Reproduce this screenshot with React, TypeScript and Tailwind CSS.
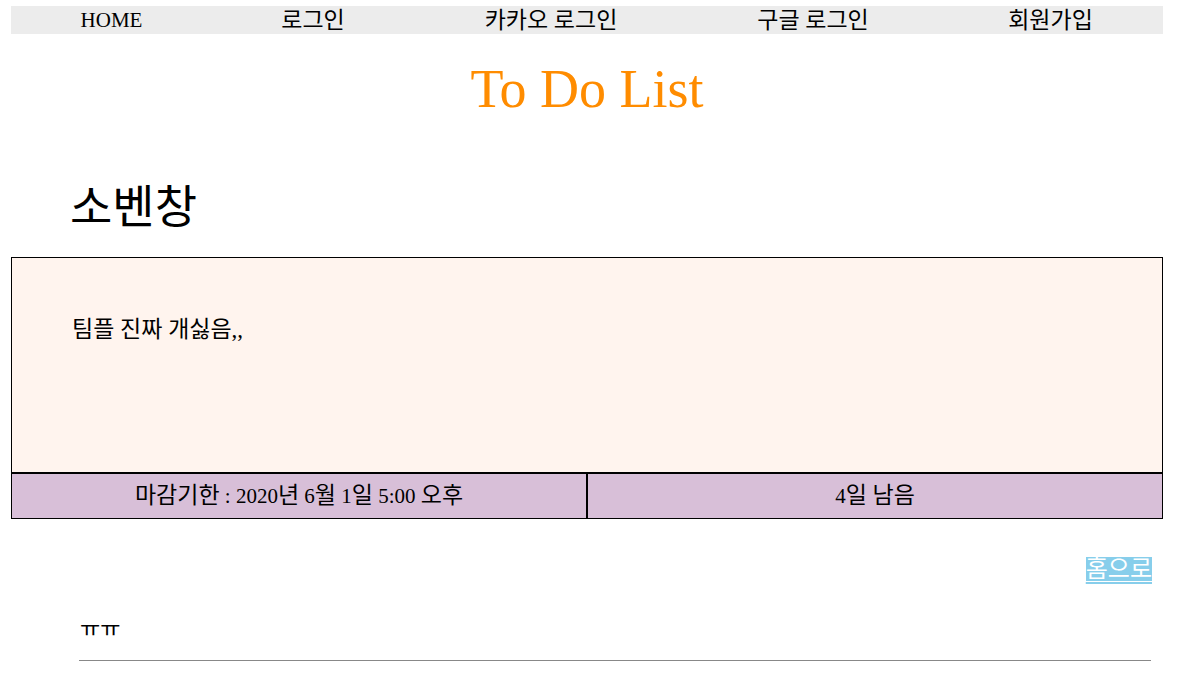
import React from "react";

const F = { fontFamily: '"Liberation Serif", "Noto Sans CJK KR", serif' };

export default function App() {
  return (
    <div className="bg-white text-black min-h-[691px]" style={F}>
      <div className="pt-[6px] px-[11px] pr-[24px]">
        <div className="flex h-[28px] bg-[#ececec] items-center text-[23px] leading-none">
          <div className="w-[201px] text-center text-[21px]">HOME</div>
          <div className="w-[202px] text-center">로그인</div>
          <div className="w-[274px] text-center">카카오 로그인</div>
          <div className="w-[250px] text-center">구글 로그인</div>
          <div className="w-[225px] text-center">회원가입</div>
        </div>
      </div>
      <h1 className="ml-[11px] mr-[24px] text-center text-[#ff8c00] text-[54px] leading-none mt-[28px]">To Do List</h1>
      <h2 className="text-[46px] leading-none ml-[70px] mt-[69px]">소벤창</h2>
      <div className="mx-[11px] mr-[24px] mt-[26px] border border-black">
        <div className="h-[214px] bg-[#fff4ee] pt-[60px] pl-[60px] text-[23px] leading-none">팀플 진짜 개싫음,,</div>
        <div className="flex h-[46px] bg-[#d8bfd8] border-t-2 border-black text-[23px]">
          <div className="w-[576px] border-r-2 border-black flex items-center justify-center">
            <span>마감기한<span className="text-[21px]"> : 2020</span>년<span className="text-[21px]"> 6</span>월<span className="text-[21px]"> 1</span>일<span className="text-[21px]"> 5:00 </span>오후</span>
          </div>
          <div className="flex-1 flex items-center justify-center">
            <span><span className="text-[21px]">4</span>일 남음</span>
          </div>
        </div>
      </div>
      <div className="flex justify-end pr-[35px] mt-[38px]">
        <a className="bg-[#87ceeb] text-white underline decoration-[#87ceeb] decoration-2 underline-offset-[5px] text-[24px] leading-[24px]">홈으로</a>
      </div>
      <div className="ml-[80px] mt-[37px] text-[22px] leading-none">ㅠㅠ</div>
      <div className="ml-[79px] mr-[36px] mt-[20px] border-t border-[#888]"></div>
    </div>
  );
}
